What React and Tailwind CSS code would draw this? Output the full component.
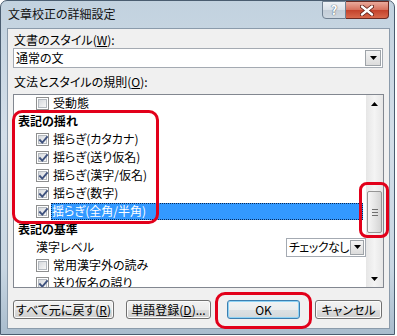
import React from "react";

const FONT = "font-['Noto_Sans_CJK_JP','Noto_Sans_CJK_SC',sans-serif] [font-feature-settings:'palt']";

function Check({ checked }) {
  return (
    <span className="flex w-[13px] h-[13px] shrink-0 border border-[#8e8f8f] bg-white p-[1px]">
      <span className="relative flex-1 border border-[#b4b9bf] bg-[linear-gradient(135deg,#d6d9dd,#f7f7f7)]">
        {checked && (
          <svg className="absolute left-[-1px] top-[-1px]" width="11" height="11" viewBox="0 0 11 11">
            <path d="M2 5.2 L4.3 7.6 L9 2.2" fill="none" stroke="#3f527e" strokeWidth="1.9" strokeLinecap="square" />
          </svg>
        )}
      </span>
    </span>
  );
}

function Btn({ children, className = "", focused = false }) {
  const base =
    "h-[19px] rounded-[3px] border flex items-center justify-center text-[12px] leading-none text-black whitespace-nowrap";
  const style = focused
    ? "border-[#3c7fb1] bg-[linear-gradient(#f1f3f4_0%,#ebedee_50%,#dde2e5_50%,#d3d8db_100%)] shadow-[inset_0_0_0_1px_#8fd3f5]"
    : "border-[#707070] bg-[linear-gradient(#f2f2f2_0%,#ebebeb_50%,#dddddd_50%,#cfcfcf_100%)] shadow-[inset_0_0_0_1px_#fbfbfb]";
  return <div className={`${base} ${style} ${className}`}>{children}</div>;
}

function Arrow({ down = true }) {
  return (
    <svg width="7" height="4" viewBox="0 0 7 4">
      {down ? <path d="M0 0 H7 L3.5 4 Z" fill="#000" /> : <path d="M0 4 H7 L3.5 0 Z" fill="#000" />}
    </svg>
  );
}

function Row({ children, className = "" }) {
  return <div className={`h-[18px] shrink-0 flex items-center whitespace-nowrap ${className}`}>{children}</div>;
}

export default function App() {
  return (
    <div className={`relative w-[397px] h-[336px] bg-white overflow-hidden text-[12px] text-black ${FONT}`}>
      {/* window */}
      <div className="w-[395px] h-[335px] rounded-t-[7px] border border-[#4a5d70] bg-[linear-gradient(180deg,#c2d2df_0%,#d3dee8_40%,#c9d7e3_80%,#a9bccd_100%)] flex flex-col">
        {/* title bar */}
        <div className="h-[27px] flex items-start shrink-0">
          <div className="pl-[7px] pt-[6px] text-[12px] leading-[14px] text-[#111] whitespace-nowrap">文章校正の詳細設定</div>
          <div className="ml-auto mr-[5px] flex">
            <div className="w-[24px] h-[18px] rounded-bl-[4px] border border-[#6f8091] bg-[linear-gradient(#eef2f6_0%,#d9e1e8_50%,#c3cdd7_50%,#cdd7e0_100%)] flex items-center justify-center text-[13px] font-bold text-white [text-shadow:0_0_1px_#4b5b6b,0_0_1px_#4b5b6b]">
              ?
            </div>
            <div className="w-[43px] h-[18px] rounded-br-[4px] border border-l-0 border-[#6b2a22] bg-[linear-gradient(#e9aa9c_0%,#d6705c_50%,#c3412a_50%,#d8694c_100%)] flex items-center justify-center">
              <svg width="14" height="11" viewBox="0 0 14 11">
                <path d="M2 1.5 L12 9.5 M12 1.5 L2 9.5" stroke="#5a1a12" strokeWidth="4" strokeLinecap="round" />
                <path d="M2 1.5 L12 9.5 M12 1.5 L2 9.5" stroke="#fff" strokeWidth="2.4" strokeLinecap="round" />
              </svg>
            </div>
          </div>
        </div>

        {/* content panel */}
        <div className="ml-[6px] w-[383px] h-[301px] border border-[#8b9bab] bg-[#f0f0f0] flex flex-col shrink-0">
          <div className="mt-[4px] ml-[6px] h-[14px] leading-[14px] whitespace-nowrap">
            文書のスタイル(<span className="underline">W</span>):
          </div>
          <div className="mt-[1px] ml-[5px] w-[370px] h-[20px] border border-[#a4aab2] bg-white flex items-center">
            <span className="pl-[2px] leading-none whitespace-nowrap">通常の文</span>
            <div className="ml-auto mr-[1px] w-[16px] h-[16px] border border-[#9ea3a8] bg-[linear-gradient(#f4f4f4,#dcdcdc)] flex items-center justify-center">
              <Arrow />
            </div>
          </div>

          <div className="mt-[7px] ml-[6px] h-[14px] leading-[14px] whitespace-nowrap">
            文法とスタイルの規則(<span className="underline">O</span>):
          </div>

          <div className="mt-[5px] ml-[5px] w-[371px] h-[194px] border border-[#828790] bg-white flex overflow-hidden">
            <div className="flex-1 flex flex-col -mt-[1px]">
              <Row className="pl-[22px]">
                <Check />
                <span className="ml-[3px] pl-[1px]">受動態</span>
              </Row>
              <Row className="pl-[4px] font-bold">表記の揺れ</Row>
              <Row className="pl-[22px]">
                <Check checked />
                <span className="ml-[3px] pl-[1px]">揺らぎ(カタカナ)</span>
              </Row>
              <Row className="pl-[22px]">
                <Check checked />
                <span className="ml-[3px] pl-[1px]">揺らぎ(送り仮名)</span>
              </Row>
              <Row className="pl-[22px]">
                <Check checked />
                <span className="ml-[3px] pl-[1px]">揺らぎ(漢字/仮名)</span>
              </Row>
              <Row className="pl-[22px]">
                <Check checked />
                <span className="ml-[3px] pl-[1px]">揺らぎ(数字)</span>
              </Row>
              <Row className="pl-[22px]">
                <Check checked />
                <span className="ml-[2px] mr-[3px] flex-1 h-[17px] bg-[#3399ff] outline outline-1 outline-dotted outline-[#0c2a55] -outline-offset-1 text-white flex items-center pl-[1px]">
                  揺らぎ(全角/半角)
                </span>
              </Row>
              <Row className="pl-[4px] font-bold">表記の基準</Row>
              <Row className="pl-[22px]">
                <span>漢字レベル</span>
                <div className="ml-auto w-[80px] h-[19px] border border-[#a4aab2] bg-white flex items-center overflow-hidden">
                  <span className="pl-[2px] leading-none whitespace-nowrap tracking-[-0.5px]">チェックなし</span>
                  <div className="ml-auto mr-[1px] w-[14px] h-[15px] shrink-0 border border-[#9ea3a8] bg-[linear-gradient(#f4f4f4,#dcdcdc)] flex items-center justify-center">
                    <Arrow />
                  </div>
                </div>
              </Row>
              <Row className="pl-[22px]">
                <Check />
                <span className="ml-[3px] pl-[1px]">常用漢字外の読み</span>
              </Row>
              <Row className="pl-[22px]">
                <Check checked />
                <span className="ml-[3px] pl-[1px]">送り仮名の誤り</span>
              </Row>
            </div>
            {/* scrollbar */}
            <div className="w-[17px] h-full shrink-0 bg-[linear-gradient(90deg,#e6e6e6,#f4f4f4_50%,#e6e6e6)] flex flex-col items-center">
              <div className="h-[17px] flex items-center justify-center">
                <Arrow down={false} />
              </div>
              <div className="mt-[79px] w-[15px] h-[42px] rounded-[2px] border border-[#959595] bg-[linear-gradient(90deg,#f6f6f6,#e6e6e6_50%,#d4d4d4)] flex flex-col items-center justify-center gap-[2px]">
                <span className="w-[6px] h-[1px] bg-[#6f6f6f]" />
                <span className="w-[6px] h-[1px] bg-[#6f6f6f]" />
                <span className="w-[6px] h-[1px] bg-[#6f6f6f]" />
              </div>
              <div className="mt-auto h-[17px] flex items-center justify-center">
                <Arrow />
              </div>
            </div>
          </div>

          <div className="mt-[12px] flex">
            <Btn className="ml-[5px] w-[101px]">
              すべて元に戻す(<span className="underline">R</span>)
            </Btn>
            <Btn className="ml-[12px] w-[85px]">
              単語登録(<span className="underline">D</span>)...
            </Btn>
            <Btn focused className="ml-[16px] w-[73px]">
              OK
            </Btn>
            <Btn className="ml-[15px] w-[67px]">キャンセル</Btn>
          </div>
        </div>
      </div>

      {/* red annotations */}
      <div className="absolute left-[12px] top-[110px] w-[147px] h-[114px] border-[3px] border-[#e2001a] rounded-[10px]" />
      <div className="absolute left-[359px] top-[182px] w-[30px] h-[56px] border-[3px] border-[#e2001a] rounded-[8px]" />
      <div className="absolute left-[215px] top-[292px] w-[97px] h-[37px] border-[3px] border-[#e2001a] rounded-[10px]" />
    </div>
  );
}
